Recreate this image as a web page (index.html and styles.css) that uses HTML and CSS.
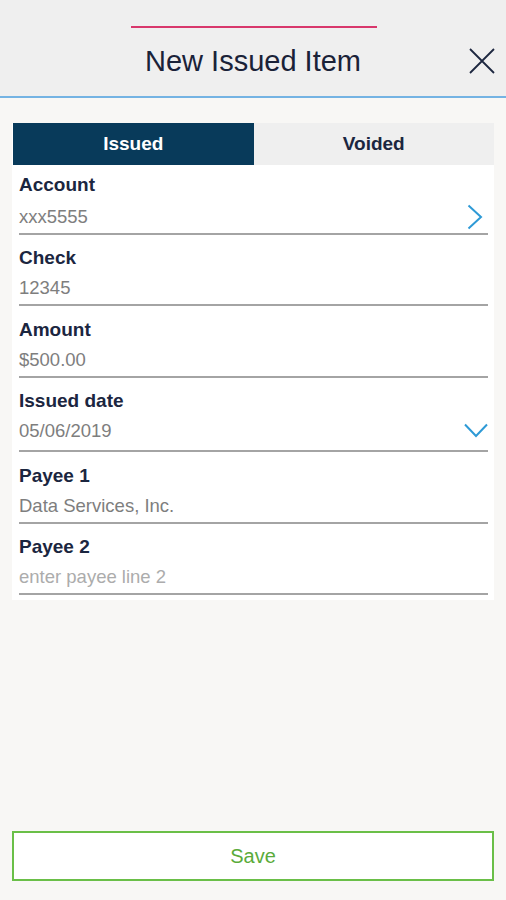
FILE: index.html
```html
<!DOCTYPE html>
<html lang="en">
<head>
<meta charset="utf-8">
<title>New Issued Item</title>
<link rel="stylesheet" href="styles.css">
</head>
<body>
<header class="header">
  <div class="grabber"></div>
  <div class="title-row">
    <span></span>
    <h1 class="title">New Issued Item</h1>
    <button class="close" aria-label="Close">
      <svg width="26" height="26" viewBox="0 0 26 26"><path d="M1 1 L25 25 M25 1 L1 25" stroke="#1d2740" stroke-width="1.8" fill="none"/></svg>
    </button>
  </div>
</header>
<main class="main">
  <section class="card">
    <div class="tabs">
      <div class="tab tab--active">Issued</div>
      <div class="tab">Voided</div>
    </div>
    <div class="field field--first">
      <div class="label">Account</div>
      <div class="value-row">
        <span class="value">xxx5555</span>
        <svg class="chev-right" width="16" height="26" viewBox="0 0 16 26"><polyline points="1.5,1.5 14,13 1.5,24.5" stroke="#2e9ad6" stroke-width="2" fill="none"/></svg>
      </div>
    </div>
    <div class="field">
      <div class="label">Check</div>
      <div class="value-row"><span class="value">12345</span></div>
    </div>
    <div class="field">
      <div class="label">Amount</div>
      <div class="value-row"><span class="value">$500.00</span></div>
    </div>
    <div class="field field--select">
      <div class="label">Issued date</div>
      <div class="value-row">
        <span class="value">05/06/2019</span>
        <svg class="chev-down" width="24" height="15" viewBox="0 0 24 15"><polyline points="1,1.5 12,13 23,1.5" stroke="#2e9ad6" stroke-width="2" fill="none"/></svg>
      </div>
    </div>
    <div class="field">
      <div class="label">Payee 1</div>
      <div class="value-row"><span class="value">Data Services, Inc.</span></div>
    </div>
    <div class="field">
      <div class="label">Payee 2</div>
      <div class="value-row"><span class="value value--placeholder">enter payee line 2</span></div>
    </div>
  </section>
</main>
<footer class="footer">
  <button class="save">Save</button>
</footer>
</body>
</html>
```
FILE: styles.css
```css
* { box-sizing: border-box; }
html, body { margin: 0; padding: 0; }
body {
  height: 100vh;
  display: flex;
  flex-direction: column;
  background: #f8f7f5;
  font-family: "Liberation Sans", Arial, sans-serif;
  color: #1b2640;
}
.header {
  background: #efefef;
  border-bottom: 2px solid #74b3e3;
  padding-top: 26px;
  height: 98px;
}
.grabber {
  width: 246px;
  height: 2px;
  background: #d8376c;
  margin: 0 0 0 131px;
}
.title-row {
  display: grid;
  grid-template-columns: 1fr auto 1fr;
  align-items: center;
  margin-top: 16px;
  padding: 0 11px;
}
.title {
  margin: 0;
  font-size: 29px;
  line-height: 34px;
  font-weight: normal;
  color: #1a2238;
}
.close {
  justify-self: end;
  background: none;
  border: 0;
  padding: 0;
  width: 26px;
  height: 26px;
  display: block;
}
.close svg { display: block; }
.main {
  flex: 1;
  padding: 25px 12px 0;
}
.card {
  background: #ffffff;
  padding: 0 6px 5px 7px;
}
.tabs {
  display: grid;
  grid-template-columns: 1fr 1fr;
  height: 42px;
  margin: 0 -6px 0 -6px;
}
.tab {
  display: flex;
  align-items: center;
  justify-content: center;
  font-size: 19px;
  font-weight: bold;
  background: #efefef;
  color: #1b2640;
}
.tab--active {
  background: #083a5a;
  color: #ffffff;
}
.field {
  padding: 12.5px 0 5px;
  border-bottom: 2px solid #a4a4a4;
}
.field--first { padding-top: 8.5px; }
.field--first .value-row { margin-top: 10px; }
.field--select { padding-bottom: 8px; }
.label {
  font-size: 19px;
  line-height: 22px;
  font-weight: bold;
  color: #1b2640;
}
.value-row {
  display: flex;
  align-items: center;
  justify-content: space-between;
  height: 22px;
  margin-top: 8px;
}
.value {
  font-size: 18.5px;
  line-height: 22px;
  color: #7e7e7e;
}
.value--placeholder { color: #acacac; }
.chev-right { margin-right: 5px; display: block; }
.chev-down { display: block; margin-top: -2px; }
.footer {
  padding: 0 12px 19px;
}
.save {
  display: block;
  width: 482px;
  height: 50px;
  background: #ffffff;
  border: 2px solid #6abf48;
  color: #5aab3a;
  font-family: "Liberation Sans", Arial, sans-serif;
  font-size: 20px;
  padding: 0;
}
```
